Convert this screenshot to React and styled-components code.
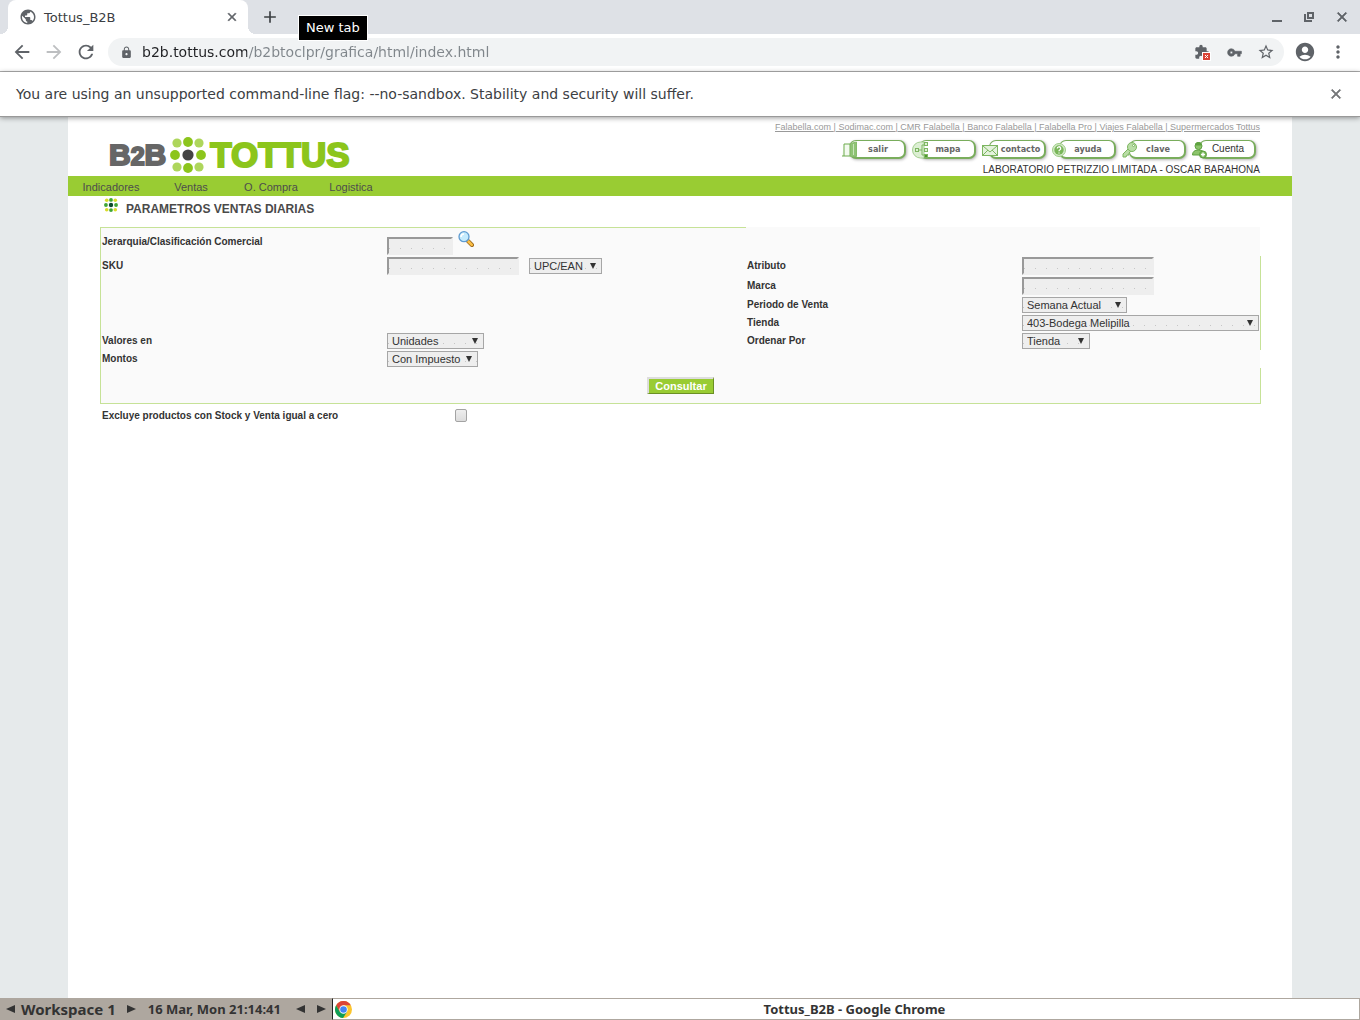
import React from "react";
import styled, { createGlobalStyle, css } from "styled-components";
import {
  MdArrowBack, MdArrowForward, MdRefresh, MdLock, MdExtension, MdVpnKey,
  MdStarBorder, MdAccountCircle, MdMoreVert, MdPublic, MdClose, MdAdd,
} from "react-icons/md";

const UI = '"DejaVu Sans", sans-serif';
const ARIAL = '"Liberation Sans", Arial, sans-serif';
const GREEN = "#99cc33";
const EDGE = "#c6e297";

const GlobalStyle = createGlobalStyle`
  *, *::before, *::after { box-sizing: border-box; }
  body { margin: 0; background: #e6eaeb; font-family: ${ARIAL}; color: #333; }
  button, input, select { font-family: inherit; margin: 0; }
  svg { display: block; flex: none; }
`;

const Screen = styled.div`
  display: flex;
  flex-direction: column;
  min-height: 100vh;
`;

/* ---------- browser frame ---------- */

const TabStrip = styled.header`
  position: relative;
  display: flex;
  align-items: center;
  height: 34px;
  padding: 0 8px;
  background: #dee1e6;
  font-family: ${UI};
`;

const Tab = styled.div`
  position: relative;
  display: flex;
  align-items: center;
  gap: 7px;
  width: 240px;
  height: 34px;
  padding: 0 8px 0 11px;
  border-radius: 8px 8px 0 0;
  background: #fff;
  color: #3c4043;
  font-size: 13px;
  svg { color: #5f6368; }
  &::before, &::after {
    content: "";
    position: absolute;
    bottom: 0;
    width: 8px;
    height: 8px;
  }
  &::before { left: -8px; background: radial-gradient(circle at 0 0, #dee1e6 8px, #fff 8px); }
  &::after { right: -8px; background: radial-gradient(circle at 100% 0, #dee1e6 8px, #fff 8px); }
`;

const TabTitle = styled.span`
  flex: 1;
`;

const IconButton = styled.button`
  display: flex;
  align-items: center;
  justify-content: center;
  width: ${(p) => p.$w || 16}px;
  height: ${(p) => p.$h || 16}px;
  padding: 0;
  border: 0;
  background: none;
  color: ${(p) => p.$tone || "#5f6368"};
  ${(p) => p.$bold && css`
    path { stroke-width: 1px; }
    path[fill="none"] { stroke: none; }
  `}
`;

const NewTab = styled(IconButton)`
  margin-left: 14px;
`;

const WindowControls = styled.div`
  display: flex;
  gap: 17px;
  margin-left: auto;
  padding-right: 2px;
`;

const Tooltip = styled.div`
  position: absolute;
  z-index: 2;
  left: 298px;
  top: 15px;
  padding: 4px 7px;
  border: 1px solid #fff;
  background: #000;
  color: #fff;
  font-size: 13px;
  line-height: 16px;
`;

const Toolbar = styled.div`
  display: flex;
  align-items: center;
  height: 38px;
  padding: 0 12px 1px;
  background: #fff;
  border-bottom: 1px solid #b0b0b0;
`;

const NavButtons = styled.div`
  display: flex;
  gap: 12px;
  width: 96px;
`;

const Omnibox = styled.div`
  display: flex;
  align-items: center;
  flex: 1;
  height: 28px;
  padding: 0 9px 0 12px;
  border-radius: 14px;
  background: #f1f3f4;
  color: #5f6368;
`;

const Address = styled.input`
  flex: 1;
  height: 20px;
  margin: 0 8px;
  padding: 0 0 0 1px;
  border: 0;
  outline: 0;
  font-family: ${UI};
  font-size: 14px;
  color: transparent;
  background: linear-gradient(90deg, #202124 106px, #80868b 106px);
  -webkit-background-clip: text;
  background-clip: text;
`;

const OmniActions = styled.div`
  display: flex;
  gap: 14px;
`;

const ToolbarEnd = styled.div`
  display: flex;
  gap: 12px;
  margin-left: 10px;
`;

const InfoBar = styled.div`
  position: relative;
  z-index: 1;
  display: flex;
  align-items: center;
  justify-content: space-between;
  height: 45px;
  padding: 0 16px;
  border-bottom: 1px solid #999;
  background: #fff;
  box-shadow: 0 1px 5px rgba(0, 0, 0, 0.4);
  color: #3c4043;
  font-family: ${UI};
  font-size: 14px;
`;

/* ---------- web page ---------- */

const Page = styled.main`
  flex: 1;
  width: 90%;
  margin: 0 auto;
  background: #fff;
`;

const Masthead = styled.div`
  display: flex;
  justify-content: space-between;
  height: 59px;
  padding: 0 32px 0 41px;
`;

const Logo = styled.h1`
  display: flex;
  align-items: center;
  gap: 4px;
  margin: 17px 0 0;
  height: 42px;
  font-size: 35px;
  line-height: 42px;
  color: #8cc51c;
`;

const LogoPrefix = styled.span`
  font-size: 30px;
  color: #666;
  -webkit-text-stroke: 2px #666;
  small { font-size: 25px; }
`;

const LogoName = styled.span`
  -webkit-text-stroke: 2px #8cc51c;
`;

const HeaderSide = styled.div`
  display: flex;
  flex-direction: column;
  align-items: flex-end;
`;

const GroupLinks = styled.nav`
  margin-top: 4px;
  color: #999;
  font-size: 9px;
  line-height: 12px;
  text-decoration: underline;
  white-space: pre;
  a { color: inherit; }
`;

const Actions = styled.div`
  display: flex;
  gap: 13px;
  margin: 7px 4px 0 0;
`;

const Pill = styled.button`
  position: relative;
  width: 57px;
  height: 19px;
  padding: 0 0 0 2px;
  border: 1px solid #79ad5c;
  border-right-width: 2px;
  border-bottom-width: 2px;
  border-radius: 7px;
  background: #fff;
  box-shadow: 1px 1px 3px rgba(0, 0, 0, 0.3);
  color: ${(p) => (p.$plain ? "#333" : "#666")};
  font-family: ${(p) => (p.$plain ? ARIAL : '"DejaVu Sans Condensed", "Open Sans", sans-serif')};
  font-size: ${(p) => (p.$plain ? 10 : 9)}px;
  font-weight: ${(p) => (p.$plain ? 400 : 700)};
  line-height: 16px;
  white-space: nowrap;
  svg { position: absolute; left: -8px; top: 0; }
`;

const PillText = styled.span`
  display: flex;
  justify-content: center;
  padding-left: ${(p) => (p.$wide ? 5 : 0)}px;
`;

const User = styled.div`
  margin-top: 5px;
  font-size: 10px;
  line-height: 12px;
`;

const MenuBar = styled.nav`
  display: flex;
  height: 20px;
  padding-left: 3px;
  background: ${GREEN};
`;

const MenuLink = styled.a`
  width: 80px;
  color: #4d4d4d;
  font-size: 11px;
  line-height: 22px;
  text-align: center;
  text-decoration: none;
`;

const Content = styled.section`
  padding: 0 31px 0 32px;
`;

const PageTitle = styled.h2`
  display: flex;
  gap: 8px;
  height: 31px;
  margin: 0;
  padding: 2px 0 0 4px;
  color: #4a4a4a;
  font-size: 12px;
  line-height: 22px;
`;

const Panel = styled.form`
  border-left: 1px solid ${EDGE};
`;

const Fields = styled.div`
  display: grid;
  grid-template-columns: 285fr 360fr 275fr 239fr;
  min-height: ${(p) => p.$h}px;
  border-right: 1px solid ${(p) => (p.$edge ? EDGE : "transparent")};
  background: #fafafa;
  background-clip: padding-box;
`;

const Cell = styled.div`
  display: flex;
  align-items: ${(p) => p.$align || "center"};
  gap: ${(p) => p.$gap || 0}px;
  padding: 1px;
  border-top: ${(p) => (p.$top ? `1px solid ${p.$top}` : 0)};
`;

const Label = styled.label`
  font-size: 10px;
  line-height: 14px;
  font-weight: 700;
`;

const dots = "linear-gradient(90deg, #c6c6c6 1px, transparent 1px) 0 9px / 11px 1px repeat-x #eee";

const TextBox = styled.input`
  width: ${(p) => p.$w}px;
  height: 18px;
  padding: 0 2px;
  border: 2px solid;
  border-color: #999 #eee #eee #999;
  background: ${dots};
  font-size: 11px;
`;

const SelectBox = styled.span`
  position: relative;
  display: flex;
  width: ${(p) => p.$w}px;
  &::after {
    content: "";
    position: absolute;
    right: 6px;
    top: 5px;
    border: solid transparent;
    border-width: 6px 3px 0;
    border-top-color: #333;
    pointer-events: none;
  }
`;

const Select = styled.select`
  appearance: none;
  width: 100%;
  height: 16px;
  padding: 0 4px;
  border: 1px solid #a6a6a6;
  border-radius: 0;
  background: ${dots};
  color: #333;
  font-size: 11px;
  line-height: 14px;
`;

const SearchButton = styled(IconButton)`
  align-items: flex-start;
`;

const SubmitRow = styled.div`
  display: flex;
  justify-content: center;
  align-items: flex-start;
  height: 36px;
  padding-top: 9px;
  border-right: 1px solid ${EDGE};
  border-bottom: 1px solid ${EDGE};
  background: #fafafa;
`;

const Submit = styled.button`
  width: 67px;
  height: 17px;
  padding: 0;
  border: solid;
  border-width: 2px 1px 1px 2px;
  border-color: #ddd #6b9023 #6b9023 #ddd;
  background: ${GREEN};
  color: #fff;
  font-size: 11px;
  font-weight: 700;
  line-height: 14px;
`;

const ExcludeRow = styled.div`
  display: grid;
  grid-template-columns: 355fr 806fr;
  align-items: center;
  height: 23px;
  label { padding-left: 2px; }
`;

const CheckBox = styled.input`
  appearance: none;
  width: 12px;
  height: 13px;
  border: 1px solid #a3a3a3;
  border-radius: 2px;
  background: linear-gradient(#eee, #dcdcdc);
`;

/* ---------- desktop panel ---------- */

const Taskbar = styled.footer`
  display: flex;
  height: 22px;
  background: #aea79f;
  color: #333;
  font-family: "Noto Sans", "Open Sans", sans-serif;
  font-size: 13px;
  font-weight: 700;
  line-height: 22px;
  white-space: nowrap;
`;

const Switcher = styled.div`
  display: flex;
  align-items: center;
  gap: 6px;
  width: 332px;
  padding: 0 6px;
`;

const Workspace = styled.span`
  width: 100px;
  font-size: 15px;
`;

const Clock = styled.time`
  margin: 0 9px 0 6px;
`;

const Arrow = styled.button`
  width: 9px;
  height: 8px;
  padding: 0;
  border: solid transparent;
  border-width: 4px ${(p) => (p.$right ? 0 : 9)}px 4px ${(p) => (p.$right ? 9 : 0)}px;
  border-${(p) => (p.$right ? "left" : "right")}-color: #333;
  background: none;
  & + & { margin-left: 6px; }
`;

const Task = styled.div`
  display: flex;
  align-items: center;
  flex: 1;
  border: 1px solid #aea79f;
  border-left-color: #222;
  background: #fff;
  padding: 0 2px;
  line-height: 20px;
`;

const TaskTitle = styled.span`
  flex: 1;
  text-align: center;
`;

/* ---------- drawings ---------- */

const ExtensionBlocked = () => (
  <svg width="17" height="17" viewBox="0 0 17 17">
    <MdExtension size={16} color="#5f6368" />
    <rect x="8" y="8" width="9" height="9" fill="#fff" />
    <rect x="9" y="9" width="7" height="7" fill="#db4437" />
    <path d="M11 11l3 3m0-3l-3 3" stroke="#fff" />
  </svg>
);

const Dots = ({ size, cross, corner, core }) => (
  <svg width={size} height={size} viewBox="0 0 36 36">
    {[[7, 6], [29, 6], [7, 30], [29, 30]].map(([x, y]) => (
      <circle key={`${x}-${y}`} cx={x} cy={y} r="4.6" fill={corner} />
    ))}
    {[[18, 5], [18, 31], [5, 18], [31, 18]].map(([x, y]) => (
      <circle key={`${x}-${y}`} cx={x} cy={y} r="4.9" fill={cross} />
    ))}
    <circle cx="18" cy="18" r="5.6" fill={core} />
  </svg>
);

const Magnifier = () => (
  <svg width="16" height="16" viewBox="0 0 16 16">
    <path d="M10 10l4 4" stroke="#9a6416" strokeWidth="4" strokeLinecap="round" />
    <path d="M10.500 10.500l3.300 3.300" stroke="#fbbf45" strokeWidth="2.600" strokeLinecap="round" />
    <circle cx="6" cy="5.700" r="5" fill="#c5ebfd" stroke="#5f9bd0" strokeWidth="1.300" />
    <path d="M3 6a3 3 0 0 1 3-3" stroke="#fff" strokeWidth="1.600" fill="none" />
  </svg>
);

const actionDrawings = {
  salir: (
    <g stroke="#6fac4f">
      <path d="M2 3h6v12H0" fill="#f3faef" />
      <path d="M2 3v12" fill="none" />
      <path d="M8.500 2.500l6-1.500v14.500h-6z" fill="#8fc375" stroke="#86bb6b" />
      <path d="M11.500 3v11" stroke="#c9e5bb" />
    </g>
  ),
  mapa: (
    <g stroke="#7db661" fill="#dcefd3">
      <path d="M8.500 1a8 8 0 0 0 0 16H12V1z" stroke="#a5cf91" />
      <path d="M6 9h4M12 4h-2v10h2" fill="none" />
      <rect x="3.500" y="7.500" width="3" height="3" />
      <rect x="12.500" y="1.500" width="3" height="3" />
      <rect x="12.500" y="7.500" width="3" height="3" />
      <rect x="12.500" y="13.500" width="3" height="3" fill="#4d9a2b" />
    </g>
  ),
  contacto: (
    <g stroke="#7db661" fill="#e4f2dc">
      <rect x="0.500" y="4.500" width="15" height="10" />
      <path d="M1 5l7 6 7-6M1 14l5-5M15 14l-5-5" fill="none" />
    </g>
  ),
  ayuda: (
    <g>
      <circle cx="7" cy="9" r="6.500" fill="#d3eac7" stroke="#9fcd88" />
      <circle cx="7" cy="9" r="4.700" fill="#79b659" />
      <path d="M5.300 7.500a1.700 1.700 0 1 1 2.400 1.500q-.7.400-.7 1.200M7 11.500v1" stroke="#fff" strokeWidth="1.300" fill="none" />
    </g>
  ),
  clave: (
    <g stroke="#7db661" fill="#b9dda6">
      <path d="M7 7L1 13v3h3l1-2h2v-2l2-2" />
      <circle cx="10" cy="6" r="4.500" />
      <circle cx="11.500" cy="4.500" r="1" fill="#fff" />
    </g>
  ),
  Cuenta: (
    <g stroke="#5fa240">
      <path d="M0.500 14q0-5 6-5t6 5z" fill="#8cc46c" />
      <circle cx="6.500" cy="5" r="3.500" fill="#8cc46c" />
      <path d="M3.500 4q0-2.500 3-2.500t3 2.500z" fill="#5fa240" />
      <circle cx="11" cy="13.500" r="3.500" fill="#79b659" />
      <path d="M11 11.500v4m-2-2h4" stroke="#fff" strokeWidth="1.400" />
    </g>
  ),
};

const ChromeMark = () => (
  <svg width="17" height="17" viewBox="0 0 18 18">
    <circle cx="9" cy="9" r="9" fill="#fbc52d" />
    <path d="M1.200 4.500A9 9 0 0 1 16.800 4.500H9L5 11.500z" fill="#db4437" />
    <path d="M1.200 4.500A9 9 0 0 0 8.500 18l4.300-6.500H5z" fill="#0f9d58" />
    <circle cx="9" cy="9" r="4.400" fill="#fff" />
    <circle cx="9" cy="9" r="3.500" fill="#4285f4" />
  </svg>
);

/* ---------- data ---------- */

const groupLinks = [
  "Falabella.com ", " Sodimac.com ", " CMR Falabella ", " Banco Falabella ",
  " Falabella Pro ", " Viajes Falabella ", " Supermercados Tottus",
];
const actions = ["salir", "mapa", "contacto", "ayuda", "clave", "Cuenta"];
const menu = ["Indicadores", "Ventas", "O. Compra", "Logistica"];

const DropDown = ({ id, width, value, label }) => (
  <SelectBox $w={width}>
    <Select id={id} aria-label={label} defaultValue={value}>
      <option>{value}</option>
    </Select>
  </SelectBox>
);

const FieldRow = ({ left, right, height }) => (
  <Fields $edge $h={height}>
    <Cell>{left && <Label htmlFor={left.id}>{left.label}</Label>}</Cell>
    <Cell $gap={10}>{left && left.control}</Cell>
    <Cell><Label htmlFor={right.id}>{right.label}</Label></Cell>
    <Cell>{right.control}</Cell>
  </Fields>
);

export default function App() {
  return (
    <Screen>
      <GlobalStyle />
      <TabStrip>
        <Tab>
          <MdPublic size={18} />
          <TabTitle>Tottus_B2B</TabTitle>
          <IconButton $bold aria-label="Close tab"><MdClose size={14} /></IconButton>
        </Tab>
        <NewTab aria-label="New tab" $tone="#3c4043"><MdAdd size={20} /></NewTab>
        <Tooltip role="tooltip">New tab</Tooltip>
        <WindowControls>
          <IconButton aria-label="Minimize">
            <svg width="16" height="16"><path d="M4 12h10" stroke="currentColor" strokeWidth="2" /></svg>
          </IconButton>
          <IconButton aria-label="Restore">
            <svg width="16" height="16" fill="none" stroke="currentColor">
              <rect x="7" y="4" width="5" height="5" strokeWidth="2" />
              <path d="M4 5v7h7" strokeWidth="2" />
            </svg>
          </IconButton>
          <IconButton $bold aria-label="Close"><MdClose size={16} /></IconButton>
        </WindowControls>
      </TabStrip>

      <Toolbar>
        <NavButtons>
          <IconButton aria-label="Back" $w={20} $h={20}><MdArrowBack size={22} /></IconButton>
          <IconButton aria-label="Forward" $w={20} $h={20} $tone="#bdbfc1"><MdArrowForward size={22} /></IconButton>
          <IconButton aria-label="Reload" $w={20} $h={20}><MdRefresh size={22} /></IconButton>
        </NavButtons>
        <Omnibox>
          <MdLock size={13} />
          <Address aria-label="Address" defaultValue="b2b.tottus.com/b2btoclpr/grafica/html/index.html" />
          <OmniActions>
            <IconButton aria-label="Extensions blocked" $w={18}><ExtensionBlocked /></IconButton>
            <IconButton $bold aria-label="Passwords" $w={18}><MdVpnKey size={15} /></IconButton>
            <IconButton aria-label="Bookmark" $w={18}><MdStarBorder size={18} /></IconButton>
          </OmniActions>
        </Omnibox>
        <ToolbarEnd>
          <IconButton aria-label="Profile" $w={22} $h={22}><MdAccountCircle size={22} /></IconButton>
          <IconButton aria-label="Menu" $w={20} $h={22}><MdMoreVert size={20} /></IconButton>
        </ToolbarEnd>
      </Toolbar>

      <InfoBar>
        <span>You are using an unsupported command-line flag: --no-sandbox. Stability and security will suffer.</span>
        <IconButton $bold aria-label="Dismiss" $tone="#757779"><MdClose size={16} /></IconButton>
      </InfoBar>

      <Page>
        <Masthead>
          <Logo>
            <LogoPrefix>B<small>2</small>B</LogoPrefix>
            <Dots size={36} cross="#8cc51c" corner="#aed65c" core="#444" />
            <LogoName>TOTTUS</LogoName>
          </Logo>
          <HeaderSide>
            <GroupLinks>
              {groupLinks.map((name, i) => (
                <React.Fragment key={name}>
                  {i > 0 && "|"}
                  <a href="#">{name}</a>
                </React.Fragment>
              ))}
            </GroupLinks>
            <Actions>
              {actions.map((name) => (
                <Pill key={name} $plain={name === "Cuenta"}>
                  <svg width="17" height="18" viewBox="0 0 17 18">{actionDrawings[name]}</svg>
                  <PillText $wide={name === "contacto"}>{name}</PillText>
                </Pill>
              ))}
            </Actions>
            <User>LABORATORIO PETRIZZIO LIMITADA - OSCAR BARAHONA</User>
          </HeaderSide>
        </Masthead>

        <MenuBar>
          {menu.map((name) => <MenuLink key={name} href="#">{name}</MenuLink>)}
        </MenuBar>

        <Content>
          <PageTitle>
            <Dots size={14} cross="#3fa535" corner="#d9dc2a" core="#0b4a2a" />
            PARAMETROS VENTAS DIARIAS
          </PageTitle>

          <Panel onSubmit={(e) => e.preventDefault()}>
            <Fields $h={29}>
              <Cell $top={EDGE}><Label htmlFor="jerarquia">Jerarquia/Clasificación Comercial</Label></Cell>
              <Cell $top={EDGE} $align="flex-end" $gap={5}>
                <TextBox id="jerarquia" $w={66} />
                <SearchButton type="button" aria-label="Buscar" $h={24}><Magnifier /></SearchButton>
              </Cell>
              <Cell />
              <Cell />
            </Fields>
            <FieldRow
              height={20}
              left={{
                id: "sku", label: "SKU",
                control: (
                  <>
                    <TextBox id="sku" $w={132} />
                    <DropDown label="Tipo de código" width={73} value="UPC/EAN" />
                  </>
                ),
              }}
              right={{ id: "atributo", label: "Atributo", control: <TextBox id="atributo" $w={132} /> }}
            />
            <FieldRow
              height={20}
              right={{ id: "marca", label: "Marca", control: <TextBox id="marca" $w={132} /> }}
            />
            <FieldRow
              height={18}
              right={{ id: "periodo", label: "Periodo de Venta", control: <DropDown id="periodo" width={105} value="Semana Actual" /> }}
            />
            <FieldRow
              height={18}
              right={{ id: "tienda", label: "Tienda", control: <DropDown id="tienda" width={237} value="403-Bodega Melipilla" /> }}
            />
            <FieldRow
              height={18}
              left={{ id: "valores", label: "Valores en", control: <DropDown id="valores" width={97} value="Unidades" /> }}
              right={{ id: "ordenar", label: "Ordenar Por", control: <DropDown id="ordenar" width={68} value="Tienda" /> }}
            />
            <Fields $h={18}>
              <Cell><Label htmlFor="montos">Montos</Label></Cell>
              <Cell><DropDown id="montos" width={91} value="Con Impuesto" /></Cell>
            </Fields>
            <SubmitRow><Submit type="submit">Consultar</Submit></SubmitRow>
          </Panel>

          <ExcludeRow>
            <Label htmlFor="excluye">Excluye productos con Stock y Venta igual a cero</Label>
            <CheckBox type="checkbox" id="excluye" />
          </ExcludeRow>
        </Content>
      </Page>

      <Taskbar>
        <Switcher>
          <Arrow aria-label="Previous workspace" />
          <Workspace>Workspace 1</Workspace>
          <Arrow $right aria-label="Next workspace" />
          <Clock>16 Mar, Mon 21:14:41</Clock>
          <Arrow aria-label="Previous window" />
          <Arrow $right aria-label="Next window" />
        </Switcher>
        <Task>
          <ChromeMark />
          <TaskTitle>Tottus_B2B - Google Chrome</TaskTitle>
        </Task>
      </Taskbar>
    </Screen>
  );
}
